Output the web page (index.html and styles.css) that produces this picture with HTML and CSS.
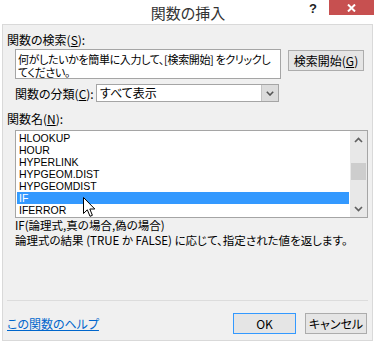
FILE: index.html
```html
<!DOCTYPE html>
<html lang="ja">
<head>
  <meta charset="UTF-8">
  <title>関数の挿入</title>
  <link rel="stylesheet" href="styles.css">
</head>
<body>

<div class="window">
  <!-- タイトルバー -->
  <div class="titlebar">
    <div></div>
    <div class="title">関数の挿入</div>
    <div class="controls">
      <span class="help">?</span>
      <span class="close">
        <svg width="9" height="8" viewBox="0 0 9 8"><path d="M1 0.5 L8 7.5 M8 0.5 L1 7.5" stroke="#fff" stroke-width="2"/></svg>
      </span>
    </div>
  </div>

  <div class="client">
    <div class="label">関数の検索(<u>S</u>):</div>
    <div class="search-row">
      <div class="search-box">何がしたいかを簡単に入力して、[検索開始] をクリックし<br>てください。</div>
      <button class="btn btn-search">検索開始(<u>G</u>)</button>
    </div>

    <div class="category-row">
      <span class="category-label">関数の分類(<u>C</u>):</span>
      <div class="select">
        <span class="select-value">すべて表示</span>
        <span class="select-arrow">
          <svg width="8" height="5" viewBox="0 0 8 5"><path d="M0.8 0.8 L4 4 L7.2 0.8" fill="none" stroke="#555" stroke-width="1.6"/></svg>
        </span>
      </div>
    </div>

    <div class="label label-list">関数名(<u>N</u>):</div>
    <div class="listbox">
      <ul class="items">
        <li>HLOOKUP</li>
        <li>HOUR</li>
        <li>HYPERLINK</li>
        <li>HYPGEOM.DIST</li>
        <li>HYPGEOMDIST</li>
        <li class="selected">IF</li>
        <li>IFERROR</li>
      </ul>
      <div class="scrollbar">
        <span class="arrow">
          <svg width="9" height="6" viewBox="0 0 9 6"><path d="M1 5 L4.5 1.5 L8 5" fill="none" stroke="#606060" stroke-width="1.7"/></svg>
        </span>
        <div class="track"><div class="thumb"></div></div>
        <span class="arrow">
          <svg width="9" height="6" viewBox="0 0 9 6"><path d="M1 1 L4.5 4.5 L8 1" fill="none" stroke="#606060" stroke-width="1.7"/></svg>
        </span>
      </div>
      <!-- マウスカーソル -->
      <svg class="cursor" width="13" height="21" viewBox="0 0 13 21">
        <path d="M0.5 0.5 L0.5 16.5 L4.3 12.8 L7 19.3 L9.4 18.3 L6.8 12 L11.8 12 Z" fill="#fff" stroke="#000" stroke-width="1" stroke-linejoin="round"/>
      </svg>
    </div>

    <div class="desc">
      <div>IF(論理式,真の場合,偽の場合)</div>
      <div>論理式の結果 (TRUE か FALSE) に応じて、指定された値を返します。</div>
    </div>

    <div class="separator"></div>

    <div class="footer">
      <a href="#" class="help-link">この関数のヘルプ</a>
      <div class="buttons">
        <button class="btn btn-ok">OK</button>
        <button class="btn btn-cancel">キャンセル</button>
      </div>
    </div>
  </div>
</div>

</body>
</html>
```

FILE: styles.css
```css
body {
  margin: 0;
  width: 376px;
  height: 343px;
  overflow: hidden;
  background: #fff;
  font-family: "Noto Sans CJK JP", sans-serif;
  font-size: 12px;
  font-feature-settings: "palt";
  color: #000;
}

.window {
  height: 343px;
  display: flex;
  flex-direction: column;
}

/* タイトルバー */
.titlebar {
  height: 24px;
  flex-shrink: 0;
  display: grid;
  grid-template-columns: 1fr auto 1fr;
}

.title {
  font-size: 15px;
  line-height: 25px;
  color: #333;
}

.controls {
  display: flex;
  justify-content: flex-end;
  align-items: flex-start;
  padding-right: 2px;
}

.help {
  font: bold 13px "Liberation Sans", sans-serif;
  color: #222;
  margin: 1px 12px 0 0;
}

.close {
  width: 45px;
  height: 15px;
  background: #c75050;
  display: flex;
  align-items: center;
  justify-content: center;
}

/* 本体 */
.client {
  flex: 1;
  margin: 0 3px 2px 2px;
  border: 1px solid #d9d9d9;
  background: #f0f0f0;
  padding: 8px 4px 6px 4px;
  display: flex;
  flex-direction: column;
}

.label {
  line-height: 14px;
}

.search-row {
  display: flex;
  align-items: flex-start;
  margin: 2px 0 0 8px;
}

.search-box {
  width: 266px;
  height: 30px;
  box-sizing: border-box;
  border: 1px solid #a5a5a5;
  background: #fff;
  padding: 3px 2px 0;
  font-size: 11px;
  letter-spacing: -0.35px;
  line-height: 12.5px;
  overflow: hidden;
  white-space: nowrap;
}

.btn {
  font: inherit;
  color: #000;
  background: #e5e5e5;
  border: 1px solid #acacac;
  padding: 0;
  height: 21px;
  box-sizing: border-box;
}

.btn-search {
  width: 76px;
  margin: 1px 0 0 7px;
}

.category-row {
  display: flex;
  align-items: center;
  margin: 5px 0 0 8px;
}

.category-label {
  width: 81px;
}

.select {
  width: 183px;
  height: 18px;
  box-sizing: border-box;
  border: 1px solid #a5a5a5;
  background: #fff;
  display: flex;
}

.select-value {
  flex: 1;
  line-height: 16px;
  padding-left: 3px;
}

.select-arrow {
  width: 16px;
  background: #dcdcdc;
  border-left: 1px solid #c4c4c4;
  display: flex;
  align-items: center;
  justify-content: center;
}

.label-list {
  margin-top: 10px;
}

/* 関数リスト */
.listbox {
  position: relative;
  margin: 4px 0 0 8px;
  height: 88px;
  box-sizing: border-box;
  border: 1px solid #a5a5a5;
  background: #fff;
  display: flex;
}

.items {
  flex: 1;
  list-style: none;
  margin: 0;
  padding: 1px 1px 0;
  overflow: hidden;
}

.items li {
  height: 12px;
  line-height: 12px;
  padding-left: 2px;
  font-family: "Liberation Sans", sans-serif;
  font-size: 10.5px;
}

.items li.selected {
  background: #3399ff;
  color: #fff;
}

.scrollbar {
  width: 17px;
  background: #e8e8e8;
  display: flex;
  flex-direction: column;
}

.arrow {
  height: 17px;
  display: flex;
  align-items: center;
  justify-content: center;
}

.track {
  flex: 1;
  padding-top: 15px;
}

.thumb {
  height: 17px;
  margin: 0 1px;
  background: #cdcdcd;
}

.cursor {
  position: absolute;
  left: 67px;
  top: 66px;
}

.desc {
  line-height: 15px;
  padding-left: 8px;
  font-size: 11.5px;
}

.separator {
  margin-top: auto;
  border-top: 1px solid #dcdcdc;
}

.footer {
  display: flex;
  align-items: center;
  justify-content: space-between;
  margin-top: 12px;
}

.help-link {
  color: #0066cc;
}

.buttons {
  display: flex;
  gap: 9px;
  margin-right: 1px;
}

.btn-ok {
  width: 63px;
  border-color: #3399ff;
}

.btn-cancel {
  width: 62px;
}
```
